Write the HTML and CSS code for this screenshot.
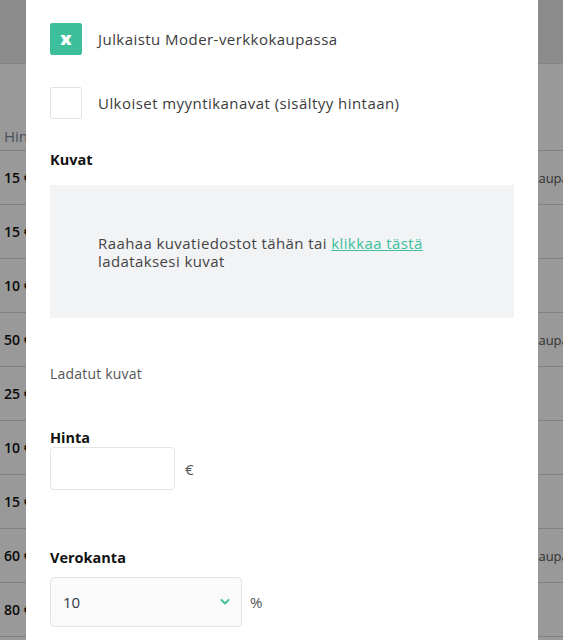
FILE: index.html
```html
<!DOCTYPE html>
<html lang="fi">
<head>
<meta charset="utf-8">
<title>Tuote</title>
<link rel="stylesheet" href="styles.css">
</head>
<body>
<div class="page">
  <div class="topbar"></div>
  <div class="table">
    <div class="thead">Hinta</div>
    <div class="trow"><span class="price">15 €</span><span class="chan">verkkokaupassa</span></div>
    <div class="trow"><span class="price">15 €</span></div>
    <div class="trow"><span class="price">10 €</span></div>
    <div class="trow"><span class="price">50 €</span><span class="chan">verkkokaupassa</span></div>
    <div class="trow"><span class="price">25 €</span></div>
    <div class="trow"><span class="price">10 €</span></div>
    <div class="trow"><span class="price">15 €</span></div>
    <div class="trow"><span class="price">60 €</span><span class="chan">verkkokaupassa</span></div>
    <div class="trow"><span class="price">80 €</span></div>
  </div>
</div>
<div class="overlay"></div>
<div class="modal">
  <label class="check-row">
    <span class="box box-on">x</span>
    <span class="check-text">Julkaistu Moder-verkkokaupassa</span>
  </label>
  <label class="check-row">
    <span class="box"></span>
    <span class="check-text">Ulkoiset myyntikanavat (sisältyy hintaan)</span>
  </label>
  <div class="label label-kuvat">Kuvat</div>
  <div class="dropzone">
    <p class="drop-text">Raahaa kuvatiedostot tähän tai <a class="link" href="#">klikkaa tästä</a><br>ladataksesi kuvat</p>
  </div>
  <div class="uploaded">Ladatut kuvat</div>
  <div class="label label-hinta">Hinta</div>
  <div class="field-row">
    <div class="input"></div>
    <span class="unit">€</span>
  </div>
  <div class="label label-vero">Verokanta</div>
  <div class="field-row">
    <div class="select">
      <span class="select-val">10</span>
      <svg class="chev" width="10" height="6" viewBox="0 0 10 6"><polyline points="1.5,1 5,4.5 8.5,1" fill="none" stroke="#3dbf9c" stroke-width="1.8" stroke-linecap="round" stroke-linejoin="round"/></svg>
    </div>
    <span class="unit unit-pct">%</span>
  </div>
</div>
</body>
</html>
```
FILE: styles.css
```css
html, body {
  margin: 0;
  padding: 0;
  height: 640px;
  overflow: hidden;
  font-family: "Open Sans", "Liberation Sans", sans-serif;
}
.page {
  background: #fff;
}
.topbar {
  height: 63px;
  background: #e9e9e9;
  border-bottom: 1px solid #dcdcdc;
}
.thead {
  height: 87px;
  box-sizing: border-box;
  padding: 62px 0 0 4px;
  font-size: 15px;
  color: #7c8695;
  border-bottom: 1px solid #d8d8d8;
}
.trow {
  height: 53px;
  border-bottom: 1px solid #d8d8d8;
  display: flex;
  align-items: center;
  padding-left: 4px;
  white-space: nowrap;
  overflow: hidden;
}
.price {
  flex: none;
  width: 487px;
  font-size: 14px;
  font-weight: 600;
  color: #111;
}
.chan {
  flex: none;
  font-size: 13px;
  color: #555;
}
.overlay {
  position: fixed;
  inset: 0;
  background: rgba(0, 0, 0, 0.4);
}
.modal {
  position: fixed;
  left: 26px;
  top: 0;
  width: 512px;
  height: 640px;
  box-sizing: border-box;
  background: #fff;
  padding: 23px 24px 0;
  display: flex;
  flex-direction: column;
  color: #3b3b3b;
}
.check-row {
  display: flex;
  align-items: center;
  gap: 16px;
  height: 32px;
  margin-bottom: 32px;
}
.box {
  width: 32px;
  height: 32px;
  box-sizing: border-box;
  border: 1px solid #e3e3e3;
  border-radius: 2px;
  display: flex;
  align-items: center;
  justify-content: center;
  flex: none;
}
.box-on {
  background: #3dbf9c;
  border-color: #3dbf9c;
  color: #fff;
  font-weight: 800;
  font-size: 18px;
  line-height: 1;
  padding-bottom: 3px;
}
.check-text {
  font-size: 15px;
  color: #3b3b3b;
  letter-spacing: 0.45px;
}
.label {
  font-size: 14.5px;
  font-weight: 700;
  color: #111;
  line-height: 20px;
}
.label-kuvat {
  margin-top: -1px;
  margin-bottom: 15px;
}
.dropzone {
  height: 133px;
  background: #f2f3f5;
  display: flex;
  align-items: center;
  padding-left: 48px;
}
.drop-text {
  margin: 0;
  font-size: 15px;
  line-height: 18px;
  color: #444;
  letter-spacing: 0.4px;
}
.link {
  color: #3dbf9c;
  text-decoration: underline;
}
.uploaded {
  margin-top: 46px;
  font-size: 14px;
  line-height: 20px;
  color: #555;
  letter-spacing: 0.2px;
}
.label-hinta {
  margin-top: 45px;
  line-height: 18px;
}
.field-row {
  display: flex;
  align-items: center;
  gap: 10px;
}
.input {
  width: 125px;
  height: 43px;
  box-sizing: border-box;
  border: 1px solid #e4e4e4;
  border-radius: 4px;
  background: #fff;
}
.unit {
  font-size: 15px;
  color: #555;
}
.label-vero {
  margin-top: 58px;
  margin-bottom: 9px;
}
.select {
  width: 192px;
  height: 50px;
  box-sizing: border-box;
  border: 1px solid #e4e4e4;
  border-radius: 4px;
  background: #fafafa;
  display: flex;
  align-items: center;
  justify-content: space-between;
  padding: 0 11px 0 12px;
}
.select-val {
  font-size: 15px;
  color: #2d3748;
}
.chev {
  display: block;
}
.unit-pct {
  margin-left: -2px;
}
```
